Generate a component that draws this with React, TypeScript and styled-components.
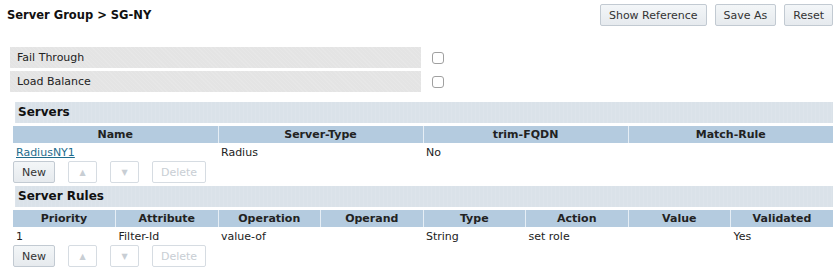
import styled, { createGlobalStyle } from 'styled-components';

const GlobalStyle = createGlobalStyle`
  body {
    margin: 0;
    background: #ffffff;
    font-family: 'DejaVu Sans', Verdana, sans-serif;
    font-size: 11px;
    color: #222;
  }
`;

const servers = [{ name: 'RadiusNY1', type: 'Radius', trim: 'No', match: '' }];

const rules = [
  {
    priority: '1',
    attribute: 'Filter-Id',
    operation: 'value-of',
    operand: '',
    type: 'String',
    action: 'set role',
    value: '',
    validated: 'Yes',
  },
];

function ListButtons() {
  return (
    <ButtonRow>
      <Button>New</Button>
      <Button disabled $narrow>
        ▲
      </Button>
      <Button disabled $narrow>
        ▼
      </Button>
      <Button disabled>Delete</Button>
    </ButtonRow>
  );
}

export default function App() {
  return (
    <Page>
      <GlobalStyle />
      <TopBar>
        <Title>Server Group &gt; SG-NY</Title>
        <Actions>
          <Button>Show Reference</Button>
          <Button>Save As</Button>
          <Button>Reset</Button>
        </Actions>
      </TopBar>

      <Options>
        <OptionRow>
          <OptionLabel>Fail Through</OptionLabel>
          <Check type="checkbox" />
        </OptionRow>
        <OptionRow>
          <OptionLabel>Load Balance</OptionLabel>
          <Check type="checkbox" />
        </OptionRow>
      </Options>

      <Section>
        <SectionTitle>Servers</SectionTitle>
        <Table>
          <thead>
            <tr>
              <Th>Name</Th>
              <Th>Server-Type</Th>
              <Th>trim-FQDN</Th>
              <Th>Match-Rule</Th>
            </tr>
          </thead>
          <tbody>
            {servers.map((s) => (
              <tr key={s.name}>
                <Td>
                  <Link href="#">{s.name}</Link>
                </Td>
                <Td>{s.type}</Td>
                <Td>{s.trim}</Td>
                <Td>{s.match}</Td>
              </tr>
            ))}
          </tbody>
        </Table>
        <ListButtons />
      </Section>

      <Section>
        <SectionTitle>Server Rules</SectionTitle>
        <Table>
          <thead>
            <tr>
              <Th>Priority</Th>
              <Th>Attribute</Th>
              <Th>Operation</Th>
              <Th>Operand</Th>
              <Th>Type</Th>
              <Th>Action</Th>
              <Th>Value</Th>
              <Th>Validated</Th>
            </tr>
          </thead>
          <tbody>
            {rules.map((r) => (
              <tr key={r.priority}>
                <Td>{r.priority}</Td>
                <Td>{r.attribute}</Td>
                <Td>{r.operation}</Td>
                <Td>{r.operand}</Td>
                <Td>{r.type}</Td>
                <Td>{r.action}</Td>
                <Td>{r.value}</Td>
                <Td>{r.validated}</Td>
              </tr>
            ))}
          </tbody>
        </Table>
        <ListButtons />
      </Section>
    </Page>
  );
}

const Page = styled.div`
  width: 840px;
  padding: 4px 7px 0 0;
  box-sizing: border-box;
`;

const TopBar = styled.div`
  display: flex;
  justify-content: space-between;
  align-items: center;
  padding-left: 7px;
`;

const Title = styled.div`
  font-weight: bold;
  font-size: 11.5px;
  color: #111;
`;

const Actions = styled.div`
  display: flex;
  gap: 8px;
`;

const Button = styled.button<{ $narrow?: boolean }>`
  height: 22px;
  padding: 0 ${({ $narrow }) => ($narrow ? '0' : '8px')};
  width: ${({ $narrow }) => ($narrow ? '29px' : 'auto')};
  font-family: 'DejaVu Sans', Verdana, sans-serif;
  font-size: 11px;
  color: #333;
  background: linear-gradient(#f3f6f8, #e6eaee);
  border: 1px solid #c2cad2;
  border-radius: 2px;
  box-sizing: border-box;

  &:disabled {
    color: #c8ced4;
    background: #ffffff;
    border-color: #d6dce2;
    font-size: ${({ $narrow }) => ($narrow ? '8px' : '11px')};
  }
`;

const Options = styled.div`
  display: flex;
  flex-direction: column;
  gap: 3px;
  margin: 21px 0 10px;
  padding-left: 10px;
`;

const OptionRow = styled.div`
  display: flex;
  align-items: center;
`;

const OptionLabel = styled.div`
  width: 411px;
  height: 21px;
  line-height: 21px;
  padding-left: 7px;
  box-sizing: border-box;
  color: #222;
  background-color: #e4e4e4;
  background-image: repeating-linear-gradient(45deg, rgba(255, 255, 255, 0.1) 0 1px, transparent 1px 3px);
`;

const Check = styled.input`
  width: 12px;
  height: 12px;
  margin: 0 0 0 11px;
  appearance: none;
  border: 1px solid #a0a0a0;
  border-radius: 3px;
  background: #fff;
`;

const Section = styled.div`
  padding-left: 13px;

  & + & {
    margin-top: 3px;
  }
`;

const SectionTitle = styled.div`
  height: 21px;
  line-height: 21px;
  margin: 0 0 3px 2px;
  padding-left: 3px;
  font-weight: bold;
  font-size: 12px;
  color: #111;
  background-color: #dae2e9;
  background-image: repeating-linear-gradient(90deg, rgba(255, 255, 255, 0.08) 0 1px, transparent 1px 4px);
`;

const Table = styled.table`
  width: 100%;
  table-layout: fixed;
  border-collapse: collapse;
`;

const Th = styled.th`
  height: 17px;
  padding: 0;
  font-weight: bold;
  font-size: 11px;
  color: #222;
  background: #b4cbdf;
  border-left: 1px solid #e6eef5;
  text-align: center;

  &:first-child {
    border-left: none;
  }
`;

const Td = styled.td`
  height: 18px;
  padding: 0 3px;
  color: #222;
  white-space: nowrap;
  vertical-align: middle;
`;

const Link = styled.a`
  color: #1f6c8c;
  text-decoration: underline;
`;

const ButtonRow = styled.div`
  display: flex;
  gap: 13px;
`;
